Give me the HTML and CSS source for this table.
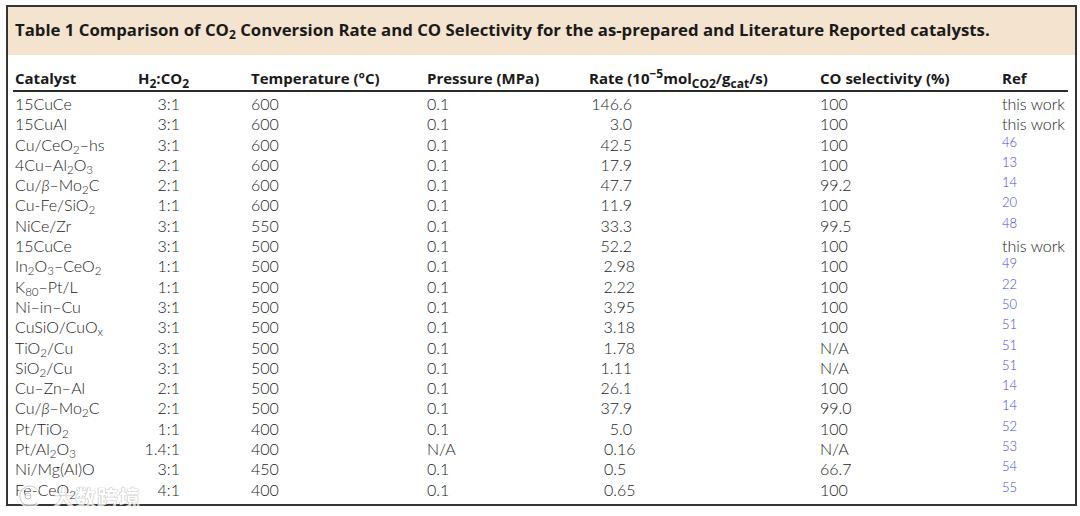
FILE: index.html
```html
<!DOCTYPE html>
<html>
<head>
<meta charset="utf-8">
<link rel="stylesheet" href="styles.css">
</head>
<body>
<div class="frame">
  <div class="caption">Table 1 Comparison of CO<sub>2</sub> Conversion Rate and CO Selectivity for the as-prepared and Literature Reported catalysts.</div>
  <table class="data">
    <colgroup>
      <col class="c1"><col class="c2"><col class="c3"><col class="c4"><col class="c5"><col class="c6"><col class="c7">
    </colgroup>
    <thead>
      <tr>
        <th>Catalyst</th>
        <th>H<sub>2</sub>:CO<sub>2</sub></th>
        <th>Temperature (°C)</th>
        <th>Pressure (MPa)</th>
        <th>Rate (10<sup>−5</sup>mol<sub>CO2</sub>/g<sub>cat</sub>/s)</th>
        <th>CO selectivity (%)</th>
        <th>Ref</th>
      </tr>
    </thead>
    <tbody>
      <tr><td>15CuCe</td><td class="ratio">3:1</td><td>600</td><td>0.1</td><td class="rate">146.6</td><td>100</td><td>this work</td></tr>
      <tr><td>15CuAl</td><td class="ratio">3:1</td><td>600</td><td>0.1</td><td class="rate">3.0</td><td>100</td><td>this work</td></tr>
      <tr><td>Cu/CeO<sub>2</sub>–hs</td><td class="ratio">3:1</td><td>600</td><td>0.1</td><td class="rate">42.5</td><td>100</td><td><span class="ref">46</span></td></tr>
      <tr><td>4Cu–Al<sub>2</sub>O<sub>3</sub></td><td class="ratio">2:1</td><td>600</td><td>0.1</td><td class="rate">17.9</td><td>100</td><td><span class="ref">13</span></td></tr>
      <tr><td>Cu/<i>β</i>–Mo<sub>2</sub>C</td><td class="ratio">2:1</td><td>600</td><td>0.1</td><td class="rate">47.7</td><td>99.2</td><td><span class="ref">14</span></td></tr>
      <tr><td>Cu-Fe/SiO<sub>2</sub></td><td class="ratio">1:1</td><td>600</td><td>0.1</td><td class="rate">11.9</td><td>100</td><td><span class="ref">20</span></td></tr>
      <tr><td>NiCe/Zr</td><td class="ratio">3:1</td><td>550</td><td>0.1</td><td class="rate">33.3</td><td>99.5</td><td><span class="ref">48</span></td></tr>
      <tr><td>15CuCe</td><td class="ratio">3:1</td><td>500</td><td>0.1</td><td class="rate">52.2</td><td>100</td><td>this work</td></tr>
      <tr><td>In<sub>2</sub>O<sub>3</sub>–CeO<sub>2</sub></td><td class="ratio">1:1</td><td>500</td><td>0.1</td><td class="rate rb">2.98</td><td>100</td><td><span class="ref">49</span></td></tr>
      <tr><td>K<sub>80</sub>–Pt/L</td><td class="ratio">1:1</td><td>500</td><td>0.1</td><td class="rate rb">2.22</td><td>100</td><td><span class="ref">22</span></td></tr>
      <tr><td>Ni–in–Cu</td><td class="ratio">3:1</td><td>500</td><td>0.1</td><td class="rate rb">3.95</td><td>100</td><td><span class="ref">50</span></td></tr>
      <tr><td>CuSiO/CuO<sub>x</sub></td><td class="ratio">3:1</td><td>500</td><td>0.1</td><td class="rate rb">3.18</td><td>100</td><td><span class="ref">51</span></td></tr>
      <tr><td>TiO<sub>2</sub>/Cu</td><td class="ratio">3:1</td><td>500</td><td>0.1</td><td class="rate rb">1.78</td><td>N/A</td><td><span class="ref">51</span></td></tr>
      <tr><td>SiO<sub>2</sub>/Cu</td><td class="ratio">3:1</td><td>500</td><td>0.1</td><td class="rate">1.11</td><td>N/A</td><td><span class="ref">51</span></td></tr>
      <tr><td>Cu–Zn–Al</td><td class="ratio">2:1</td><td>500</td><td>0.1</td><td class="rate">26.1</td><td>100</td><td><span class="ref">14</span></td></tr>
      <tr><td>Cu/<i>β</i>–Mo<sub>2</sub>C</td><td class="ratio">2:1</td><td>500</td><td>0.1</td><td class="rate">37.9</td><td>99.0</td><td><span class="ref">14</span></td></tr>
      <tr><td>Pt/TiO<sub>2</sub></td><td class="ratio">1:1</td><td>400</td><td>0.1</td><td class="rate">5.0</td><td>100</td><td><span class="ref">52</span></td></tr>
      <tr><td>Pt/Al<sub>2</sub>O<sub>3</sub></td><td class="ratio">1.4:1</td><td>400</td><td>N/A</td><td class="rate lf">0.16</td><td>N/A</td><td><span class="ref">53</span></td></tr>
      <tr><td>Ni/Mg(Al)O</td><td class="ratio">3:1</td><td>450</td><td>0.1</td><td class="rate lf">0.5</td><td>66.7</td><td><span class="ref">54</span></td></tr>
      <tr><td>Fe-CeO<sub>2</sub></td><td class="ratio">4:1</td><td>400</td><td>0.1</td><td class="rate lf">0.65</td><td>100</td><td><span class="ref">55</span></td></tr>
    </tbody>
  </table>
  <div class="watermark">
    <svg class="wm-logo" width="30" height="26" viewBox="0 0 30 26">
      <path d="M22 6 A10 10 0 1 0 22 20" fill="none" stroke="#ffffff" stroke-width="4" stroke-linecap="round"/>
      <path d="M22 6 A10 10 0 1 0 22 20" fill="none" stroke="#9a9a9a" stroke-width="1" stroke-linecap="round" opacity="0.7"/>
      <circle cx="13" cy="13" r="3" fill="#ffffff" stroke="#9a9a9a" stroke-width="0.8"/>
    </svg>
    <span class="wm-text">大数跨境</span>
  </div>
</div>
</body>
</html>
```

FILE: styles.css
```css
html, body {
  margin: 0;
  padding: 0;
  background: #ffffff;
}

.frame {
  position: relative;
  box-sizing: border-box;
  margin: 5px 0 0 6px;
  width: 1071px;
  height: 501px;
  border: 2px solid #353535;
  background: #ffffff;
}

.caption {
  box-sizing: border-box;
  height: 48px;
  background: #f4e4cf;
  padding: 11px 0 0 7px;
  font-family: "Open Sans", "DejaVu Sans", sans-serif;
  font-weight: 700;
  font-size: 16.75px;
  line-height: 24px;
  color: #1a1a1a;
  white-space: nowrap;
}

.caption sub {
  font-size: 0.72em;
  line-height: 0;
  vertical-align: -0.25em;
}

.data {
  border-collapse: collapse;
  table-layout: fixed;
  width: 1055px;
  margin-left: 5px;
  font-family: Lato, "Open Sans", sans-serif;
  font-weight: 300;
  font-size: 16px;
  color: #1c1c1c;
}

.c1 { width: 123px; }
.c2 { width: 113px; }
.c3 { width: 176px; }
.c4 { width: 162px; }
.c5 { width: 231px; }
.c6 { width: 182px; }
.c7 { width: 68px; }

.data th {
  font-family: "Open Sans", "DejaVu Sans", sans-serif;
  font-weight: 700;
  font-size: 15px;
  color: #1a1a1a;
  text-align: left;
  white-space: nowrap;
  padding: 13px 0 2px 2px;
  line-height: 20px;
  border-bottom: 2px solid #2a2a2a;
}

.data td {
  padding: 0 0 0 2px;
  height: 20.3px;
  line-height: 20.3px;
  white-space: nowrap;
  vertical-align: middle;
}

.data tbody tr:first-child td {
  padding-top: 2px;
}

.data sub, .data sup {
  font-size: 0.72em;
  line-height: 0;
}

.data th sub, .data th sup {
  font-size: 0.8em;
}

.data sub { vertical-align: -0.3em; }
.data sup { vertical-align: 0.5em; }

.data td.ratio {
  text-align: right;
  padding-right: 69px;
}

.data td.rate {
  text-align: right;
  padding-right: 186px;
}

.data td.rate.rb { padding-right: 183px; }

.data td.rate.lf {
  text-align: left;
  padding-left: 17px;
  padding-right: 0;
}

.ref {
  font-size: 13px;
  color: #4848dc;
  vertical-align: 4px;
  line-height: 0;
}

.watermark {
  position: absolute;
  left: 7px;
  top: 474px;
  display: flex;
  align-items: center;
  gap: 8px;
  opacity: 0.75;
}

.wm-text {
  font-family: "Noto Sans CJK SC", sans-serif;
  font-size: 21px;
  font-weight: 700;
  color: #ffffff;
  letter-spacing: 1px;
  text-shadow: 0 0 1px #8a8a8a, 0 0 1px #8a8a8a;
}
```
